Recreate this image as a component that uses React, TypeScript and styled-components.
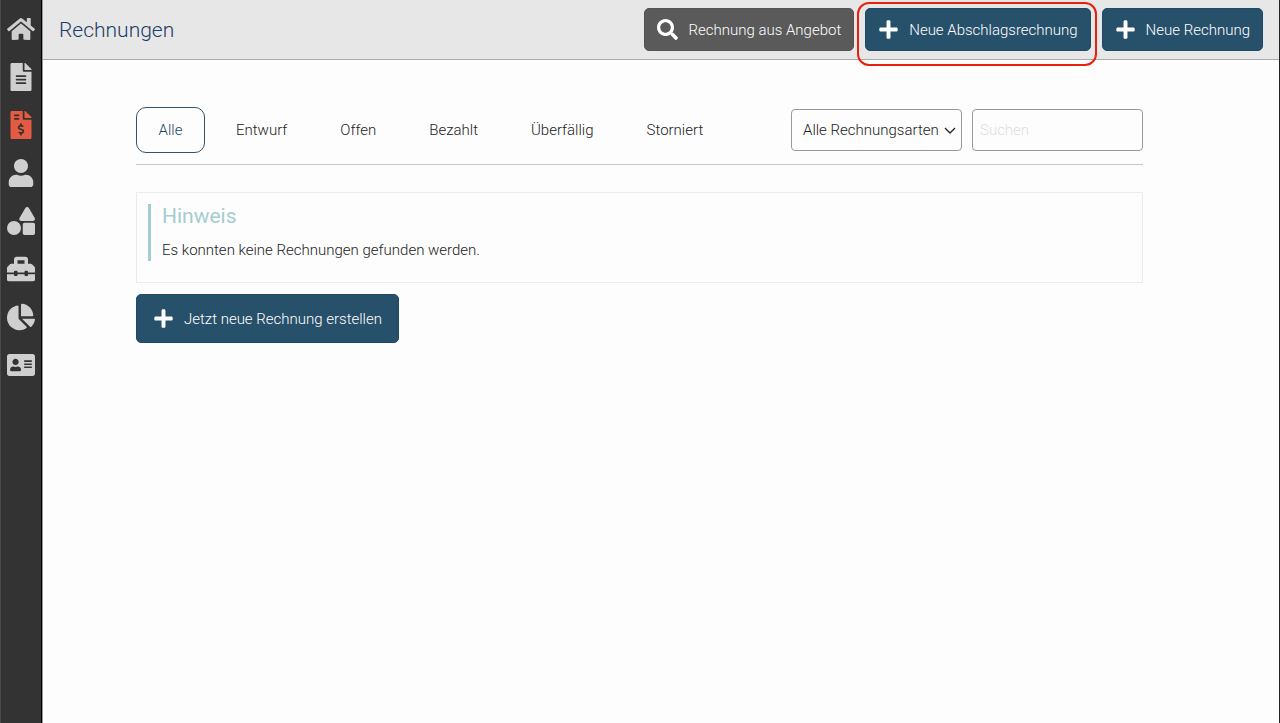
import React from 'react';
import styled, { createGlobalStyle, css } from 'styled-components';
import {
  FaHome,
  FaFileAlt,
  FaFileInvoiceDollar,
  FaUser,
  FaShapes,
  FaToolbox,
  FaChartPie,
  FaAddressCard,
  FaSearch,
  FaPlus,
} from 'react-icons/fa';

const GlobalStyle = createGlobalStyle`
  *, *::before, *::after { box-sizing: border-box; }
  body {
    margin: 0;
    background: #fdfdfd;
    color: #222;
    font-family: Roboto, "Liberation Sans", sans-serif;
    font-size: 15px;
    font-weight: 300;
    line-height: 20px;
  }
  button, input, select { font: inherit; }
`;

const Shell = styled.div`
  display: flex;
  min-height: 100vh;
`;

const Sidebar = styled.nav`
  flex: none;
  display: flex;
  flex-direction: column;
  width: 42px;
  padding-top: 5px;
  background: #333;
  border-left: 1px solid #4a4a4a;
  border-right: 1px solid #000;
`;

const NavLink = styled.a<{ $active?: boolean }>`
  display: flex;
  align-items: center;
  justify-content: center;
  height: 48px;
  color: ${(p) => (p.$active ? '#e35b42' : '#cfcfcf')};
  font-size: 28px;
`;

const Page = styled.div`
  flex: 1;
  min-width: 0;
  border-left: 1px solid #999;
  border-right: 1px solid #222;
`;

const Header = styled.header`
  display: flex;
  align-items: center;
  justify-content: space-between;
  height: 60px;
  padding: 0 16px;
  background: #e7e7e7;
  border-bottom: 1px solid #aaa;
`;

const Title = styled.h1`
  margin: 0;
  color: #1f3d66;
  font-size: 21px;
  font-weight: 300;
  line-height: 28px;
`;

const Actions = styled.div`
  display: flex;
  gap: 11px;
`;

const Button = styled.button<{ $grey?: boolean; $large?: boolean }>`
  display: flex;
  align-items: center;
  gap: 10px;
  height: ${(p) => (p.$large ? 49 : 43)}px;
  padding: 0 ${(p) => (p.$large ? 16 : 12)}px;
  border: 1px solid ${(p) => (p.$grey ? '#545454' : '#204a68')};
  border-radius: 5px;
  background: ${(p) => (p.$grey ? '#5a5a5a' : '#27506b')};
  color: #fff;
  cursor: pointer;

  svg { font-size: 21px; }
`;

const Highlight = styled.div`
  position: relative;

  &::after {
    content: '';
    position: absolute;
    inset: -6px -6px -15px -8px;
    border: 2px solid #e8200c;
    border-radius: 12px;
    pointer-events: none;
  }
`;

const Main = styled.main`
  padding: 47px 136px 40px 93px;
`;

const FilterBar = styled.div`
  display: flex;
  align-items: center;
  justify-content: space-between;
  padding-bottom: 11px;
  border-bottom: 1px solid #c4c4c4;
`;

const Tabs = styled.div`
  display: flex;
  gap: 9px;
`;

const Tab = styled.button<{ $active?: boolean }>`
  min-width: 69px;
  height: 46px;
  padding: 0 21px;
  border: 1px solid ${(p) => (p.$active ? '#34526a' : 'transparent')};
  border-radius: 10px;
  background: transparent;
  color: ${(p) => (p.$active ? '#1b4565' : '#222')};
  cursor: pointer;
`;

const Filters = styled.div`
  display: flex;
  gap: 10px;
`;

const field = css`
  width: 171px;
  height: 42px;
  border: 1px solid #999;
  border-radius: 4px;
  background-color: #fdfdfd;
  color: #222;
`;

const SelectWrap = styled.div`
  position: relative;

  svg {
    position: absolute;
    top: 18px;
    right: 6px;
    pointer-events: none;
  }
`;

const Select = styled.select`
  ${field}
  padding: 0 20px 0 11px;
  appearance: none;
`;

const Search = styled.input`
  ${field}
  padding: 0 7px;

  &::placeholder { color: #ddd; opacity: 1; }
`;

const Notice = styled.section`
  margin: 27px 0 11px;
  padding: 11px 11px 21px;
  border: 1px solid #ebebeb;
`;

const NoticeBody = styled.div`
  padding-left: 11px;
  border-left: 3px solid #a3cdd0;
`;

const NoticeTitle = styled.h2`
  margin: 0;
  color: #a3cdd0;
  font-size: 21px;
  font-weight: 400;
  line-height: 24px;
`;

const NoticeText = styled.p`
  margin: 0;
  padding: 12px 0 1px;
`;

const navItems = [
  { label: 'Start', Icon: FaHome },
  { label: 'Angebote', Icon: FaFileAlt },
  { label: 'Rechnungen', Icon: FaFileInvoiceDollar, active: true },
  { label: 'Kunden', Icon: FaUser },
  { label: 'Artikel', Icon: FaShapes },
  { label: 'Werkzeuge', Icon: FaToolbox },
  { label: 'Auswertung', Icon: FaChartPie },
  { label: 'Kontakte', Icon: FaAddressCard },
];

const tabs = ['Alle', 'Entwurf', 'Offen', 'Bezahlt', 'Überfällig', 'Storniert'];

export default function App() {
  const [tab, setTab] = React.useState('Alle');

  return (
    <Shell>
      <GlobalStyle />
      <Sidebar>
        {navItems.map(({ label, Icon, active }) => (
          <NavLink key={label} href="#" aria-label={label} $active={active}>
            <Icon />
          </NavLink>
        ))}
      </Sidebar>
      <Page>
        <Header>
          <Title>Rechnungen</Title>
          <Actions>
            <Button $grey><FaSearch />Rechnung aus Angebot</Button>
            <Highlight>
              <Button><FaPlus />Neue Abschlagsrechnung</Button>
            </Highlight>
            <Button><FaPlus />Neue Rechnung</Button>
          </Actions>
        </Header>
        <Main>
          <FilterBar>
            <Tabs>
              {tabs.map((name) => (
                <Tab key={name} $active={name === tab} onClick={() => setTab(name)}>
                  {name}
                </Tab>
              ))}
            </Tabs>
            <Filters>
              <SelectWrap>
                <Select aria-label="Rechnungsart">
                  <option>Alle Rechnungsarten</option>
                </Select>
                <svg width="12" height="8" viewBox="0 0 12 8" fill="none" stroke="#222" strokeWidth="1.3" aria-hidden="true">
                  <path d="M1 1l5 5 5-5" />
                </svg>
              </SelectWrap>
              <Search type="search" aria-label="Suchen" placeholder="Suchen" />
            </Filters>
          </FilterBar>
          <Notice>
            <NoticeBody>
              <NoticeTitle>Hinweis</NoticeTitle>
              <NoticeText>Es konnten keine Rechnungen gefunden werden.</NoticeText>
            </NoticeBody>
          </Notice>
          <Button $large><FaPlus />Jetzt neue Rechnung erstellen</Button>
        </Main>
      </Page>
    </Shell>
  );
}
